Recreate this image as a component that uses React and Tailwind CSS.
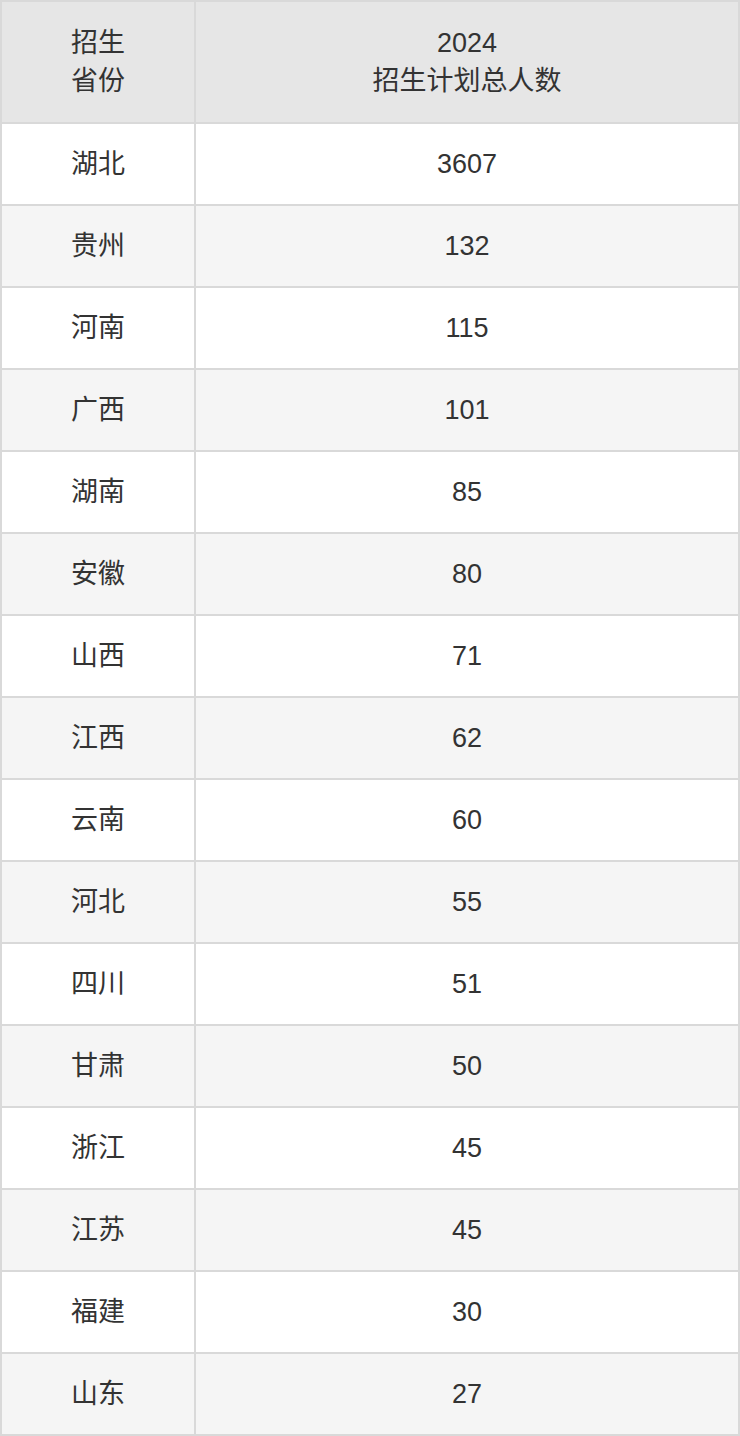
import React from 'react'

const rows = [
  ['湖北', '3607'],
  ['贵州', '132'],
  ['河南', '115'],
  ['广西', '101'],
  ['湖南', '85'],
  ['安徽', '80'],
  ['山西', '71'],
  ['江西', '62'],
  ['云南', '60'],
  ['河北', '55'],
  ['四川', '51'],
  ['甘肃', '50'],
  ['浙江', '45'],
  ['江苏', '45'],
  ['福建', '30'],
  ['山东', '27'],
]

const App = () => {
  return (
    <div
      className="w-[740px] bg-[#d9d9d9] p-[2px] text-[27px] leading-[38px] text-[#333333]"
      style={{ fontFamily: '"Liberation Sans", "Noto Sans CJK SC", sans-serif' }}
    >
      <div className="grid grid-cols-[192px_542px] gap-[2px]">
        {/* Header */}
        <div className="h-[120px] bg-[#e6e6e6] flex items-center justify-center text-center">
          招生<br />省份
        </div>
        <div className="h-[120px] bg-[#e6e6e6] flex items-center justify-center text-center">
          2024<br />招生计划总人数
        </div>

        {/* Rows */}
        {rows.map(([prov, num], i) => (
          <React.Fragment key={prov + i}>
            <div className={`h-[80px] flex items-center justify-center ${i % 2 ? 'bg-[#f5f5f5]' : 'bg-white'}`}>
              {prov}
            </div>
            <div className={`h-[80px] flex items-center justify-center ${i % 2 ? 'bg-[#f5f5f5]' : 'bg-white'}`}>
              {num}
            </div>
          </React.Fragment>
        ))}
      </div>
    </div>
  )
}

export default App
